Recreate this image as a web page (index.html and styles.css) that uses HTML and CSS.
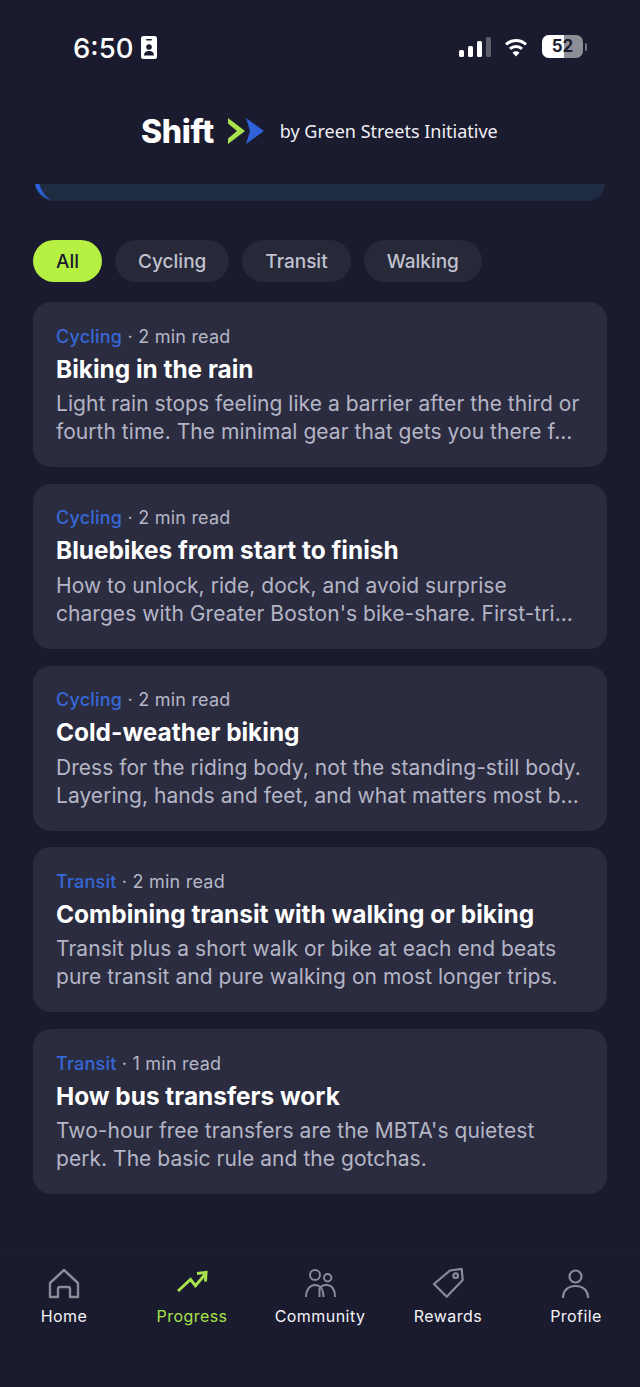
FILE: index.html
```html
<!DOCTYPE html>
<html lang="en">
<head>
<meta charset="utf-8">
<title>Shift</title>
<link rel="stylesheet" href="styles.css">
</head>
<body>
<div class="app">
  <div class="status">
    <div class="status-left">
      <span class="time">6:50</span>
      <svg class="id-icon" width="16" height="23" viewBox="0 0 16 23"><rect width="16" height="23" rx="2.500" fill="#fff"/><rect x="5" y="3" width="6" height="1.600" rx=".8" fill="#1a1b2e"/><circle cx="8" cy="11" r="2.800" fill="#1a1b2e"/><path d="M3 19.500c0-3.200 2.200-4.600 5-4.600s5 1.400 5 4.600z" fill="#1a1b2e"/></svg>
    </div>
    <div class="status-right">
      <svg width="32" height="22" viewBox="0 0 32 22"><rect x="0" y="14" width="5" height="7" rx="1.500" fill="#fff"/><rect x="9" y="10" width="5" height="11" rx="1.500" fill="#fff"/><rect x="18" y="5" width="5" height="16" rx="1.500" fill="#fff"/><rect x="27" y="1" width="5" height="20" rx="1.500" fill="#5c5d6a"/></svg>
      <svg class="wifi" width="24" height="20" viewBox="0 0 24 20"><path d="M2 7.500a14.500 14.500 0 0 1 20 0" fill="none" stroke="#fff" stroke-width="3"/><path d="M6 11.800a8.800 8.800 0 0 1 12 0" fill="none" stroke="#fff" stroke-width="3"/><path d="M12 19.500l-3.500-3.800a5 5 0 0 1 7 0z" fill="#fff"/></svg>
      <div class="battery"><div class="battery-fill"></div><span class="battery-num">52</span></div>
      <div class="battery-cap"></div>
    </div>
  </div>

  <header class="brand">
    <span class="brand-name">Shift</span>
    <svg class="brand-mark" width="38" height="28" viewBox="0 0 38 28"><path d="M1 1l17 13-17 13 0-5.500 9-7.500-9-7.500z" fill="#a8e34c"/><path d="M19 1l18 13-18 13 4-13z" fill="#2f62d9"/></svg>
    <span class="brand-by">by Green Streets Initiative</span>
  </header>

  <main class="scroll">
    <div class="peek"><svg class="peek-arc" width="30" height="18" viewBox="0 0 30 18"><path d="M0 0c1.500 7 6 13 17 16.500-7-4-11-10-12.500-16.500z" fill="#2f62d9"/></svg></div>

    <nav class="chips">
      <span class="chip chip-on">All</span>
      <span class="chip">Cycling</span>
      <span class="chip">Transit</span>
      <span class="chip">Walking</span>
    </nav>

    <section class="cards">
      <article class="card">
        <p class="meta"><span class="cat">Cycling</span> · 2 min read</p>
        <h2 class="title">Biking in the rain</h2>
        <p class="desc">Light rain stops feeling like a barrier after the third or<br>fourth time. The minimal gear that gets you there f...</p>
      </article>
      <article class="card">
        <p class="meta"><span class="cat">Cycling</span> · 2 min read</p>
        <h2 class="title">Bluebikes from start to finish</h2>
        <p class="desc">How to unlock, ride, dock, and avoid surprise<br>charges with Greater Boston's bike-share. First-tri...</p>
      </article>
      <article class="card">
        <p class="meta"><span class="cat">Cycling</span> · 2 min read</p>
        <h2 class="title">Cold-weather biking</h2>
        <p class="desc">Dress for the riding body, not the standing-still body.<br>Layering, hands and feet, and what matters most b...</p>
      </article>
      <article class="card">
        <p class="meta"><span class="cat">Transit</span> · 2 min read</p>
        <h2 class="title">Combining transit with walking or biking</h2>
        <p class="desc">Transit plus a short walk or bike at each end beats<br>pure transit and pure walking on most longer trips.</p>
      </article>
      <article class="card">
        <p class="meta"><span class="cat">Transit</span> · 1 min read</p>
        <h2 class="title">How bus transfers work</h2>
        <p class="desc">Two-hour free transfers are the MBTA's quietest<br>perk. The basic rule and the gotchas.</p>
      </article>
    </section>
  </main>

  <footer class="tabs">
    <div class="tab">
      <svg class="tab-icon" width="32" height="32" viewBox="0 0 32 32" fill="none" stroke="#8b8c98" stroke-width="2.400" stroke-linejoin="round"><path d="M2 15L16 2l14 13v14h-8v-8a2 2 0 0 0-2-2h-8a2 2 0 0 0-2 2v8H2z"/></svg>
      <span>Home</span>
    </div>
    <div class="tab tab-on">
      <svg class="tab-icon" width="32" height="32" viewBox="0 0 32 32" fill="none" stroke="#a8e34c" stroke-width="3"><path d="M2 23L14.500 11.500l5 6.200L29 6.500"/><path d="M21 5.500l9-1-.5 9"/></svg>
      <span>Progress</span>
    </div>
    <div class="tab">
      <svg class="tab-icon" width="32" height="32" viewBox="0 0 32 32" fill="none" stroke="#8b8c98" stroke-width="2"><circle cx="11" cy="7" r="5"/><circle cx="23.700" cy="9.700" r="3.700"/><path d="M2 29c0-7 3.500-12 9-12s8.500 5 8.500 12"/><path d="M15 21c1.800-3 5-4.500 8.500-4 5 .8 7.500 5.500 7.500 12M15.500 21v8"/></svg>
      <span>Community</span>
    </div>
    <div class="tab">
      <svg class="tab-icon" width="32" height="32" viewBox="0 0 32 32" fill="none" stroke="#8b8c98" stroke-width="2.200" stroke-linejoin="round"><path d="M18 2.500L29.700 1l1 11L14.700 28.700 2 16z"/><circle cx="23.700" cy="7.700" r="2.300"/></svg>
      <span>Rewards</span>
    </div>
    <div class="tab">
      <svg class="tab-icon" width="32" height="32" viewBox="0 0 32 32" fill="none" stroke="#8b8c98" stroke-width="2.200"><circle cx="15.500" cy="8.500" r="6"/><path d="M3 30c0-7 4.500-12 12.500-12S28 23 28 30"/></svg>
      <span>Profile</span>
    </div>
  </footer>
</div>
</body>
</html>
```
FILE: styles.css
```css
* { box-sizing: border-box; margin: 0; padding: 0; }
html, body { background: #1a1b2e; }
body { font-family: Inter, "Noto Sans", sans-serif; color: #fff; }
.app { width: 640px; height: 1387px; display: flex; flex-direction: column; overflow: hidden; background: #1a1b2e; }

.status { height: 94px; display: flex; justify-content: space-between; align-items: flex-start; padding: 33px 53px 0 73px; flex: none; }
.status-left { display: flex; align-items: center; gap: 8px; }
.time { font-size: 27.500px; line-height: 30px; font-weight: 500; }
.id-icon { margin-top: -1px; }
.status-right { display: flex; align-items: center; height: 27px; }
.wifi { margin-left: 13px; }
.battery { position: relative; width: 41px; height: 23px; margin-left: 14px; border-radius: 7px; overflow: hidden; background: #8e8e96; }
.battery-fill { width: 22px; height: 100%; background: #fff; }
.battery-num { position: absolute; inset: 0; text-align: center; font-size: 17px; line-height: 23px; font-weight: 700; color: #1a1b2e; }
.battery-cap { width: 2px; height: 8px; margin-left: 2px; border-radius: 0 2px 2px 0; background: #77777f; }

.brand { height: 56px; flex: none; display: flex; align-items: center; padding-left: 141px; padding-top: 18px; }
.brand-name { font-size: 32px; font-weight: 800; letter-spacing: -.35px; line-height: 42px; padding-top: 2px; }
.brand-mark { margin-left: 13px; }
.brand-by { font-family: "Noto Sans", sans-serif; font-size: 18px; margin-left: 15px; color: #f0f0f4; }

.scroll { flex: 1; min-height: 0; padding: 34px 33px 0; }
.peek { position: relative; height: 17px; margin: 0 2px; background: #1e2b40; border-radius: 0 0 20px 20px; overflow: hidden; }
.peek-arc { position: absolute; left: 0; top: 0; }

.chips { display: flex; gap: 13px; margin-top: 39px; }
.chip { height: 42px; padding: 0 23px; border-radius: 21px; background: #272838; color: #c0c1cf; font-size: 19px; font-weight: 500; line-height: 44px; }
.chip-on { background: #b5f043; color: #1a1b2e; }

.cards { display: flex; flex-direction: column; gap: 16.750px; margin-top: 20px; }
.card { height: 165px; padding: 22.500px 23px 0; background: #2b2c40; border-radius: 18px; }
.meta { font-size: 18px; line-height: 24px; color: #b5b6c6; letter-spacing: .22px; }
.cat { color: #3668d8; font-weight: 500; }
.title { font-size: 24.400px; line-height: 30px; font-weight: 700; color: #fff; margin-top: 5px; }
.desc { font-size: 21px; line-height: 28px; color: #b4b5c5; margin-top: 6.500px; white-space: nowrap; letter-spacing: .04px; }

.tabs { height: 136px; flex: none; display: grid; grid-template-columns: repeat(5, 128px); border-top: 1px solid #20212f; padding-top: 16px; }
.tab { display: flex; flex-direction: column; align-items: center; font-size: 16px; line-height: 20px; font-weight: 400; color: #f3f3f6; letter-spacing: .45px; }
.tab-icon { margin-bottom: 6px; }
.tab-on { color: #a8e34c; }
```
